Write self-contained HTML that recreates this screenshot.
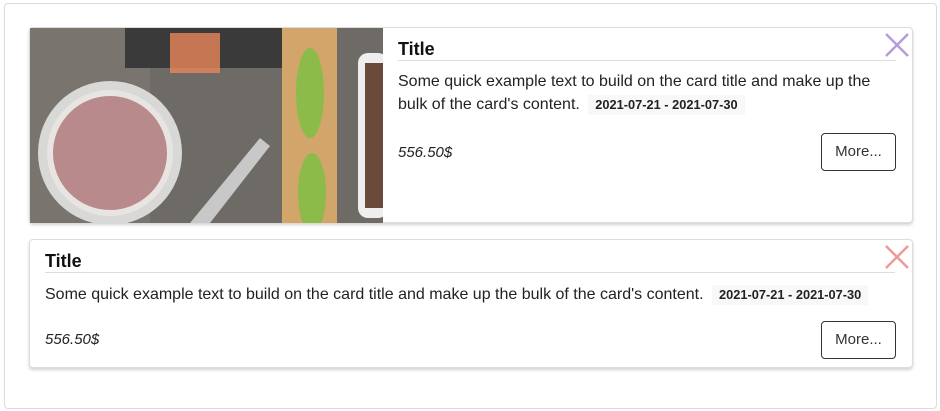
<!DOCTYPE html>
<html><head><style>
*{box-sizing:border-box;margin:0;padding:0}
body{width:940px;height:411px;background:#fff;font-family:"Liberation Sans",sans-serif;color:#212529;position:relative;overflow:hidden}
.outer{position:absolute;left:4px;top:3px;width:933px;height:406px;border:1px solid #dcdcdc;border-radius:4px}
.card{position:absolute;left:29px;width:884px;background:#fff;border:1px solid #ddd;border-radius:4px;box-shadow:0 2px 3px rgba(0,0,0,.18)}
.title{position:absolute;font-size:18px;font-weight:bold;color:#111;border-bottom:1px solid #ddd}
.text{position:absolute;font-size:16px;line-height:23px;color:#222;white-space:nowrap}
.badge{display:inline-block;background:#f8f8f8;font-size:12.8px;font-weight:bold;padding:0 7px;line-height:20px;margin-left:4px}
.price{position:absolute;font-size:15px;font-style:italic;color:#222}
.btn{position:absolute;width:75px;height:38px;border:1px solid #333;border-radius:4px;font-size:15px;line-height:36px;text-align:center;color:#333}
.x{position:absolute}
</style></head><body>
<div class="outer"></div>
<div class="card" style="top:27px;height:196px">
  <svg style="position:absolute;left:0;top:0" width="353" height="195">
    <rect width="353" height="195" fill="#6e6a66"/>
    <rect x="0" y="0" width="120" height="195" fill="#7a746e"/>
    <circle cx="80" cy="125" r="72" fill="#d8d8d6"/>
    <circle cx="80" cy="125" r="60" fill="#b98a8c"/>
    <circle cx="80" cy="125" r="60" fill="none" stroke="#e8e4e2" stroke-width="6"/>
    <rect x="95" y="0" width="160" height="40" fill="#3a3a3a"/>
    <rect x="140" y="5" width="50" height="40" fill="#e8875a" opacity=".8"/>
    <polygon points="160,195 230,110 240,118 180,195" fill="#c8c8c8"/>
    <rect x="252" y="0" width="55" height="195" fill="#d2a56a"/>
    <ellipse cx="280" cy="65" rx="14" ry="45" fill="#8cbb4a"/>
    <ellipse cx="282" cy="165" rx="14" ry="40" fill="#8cbb4a"/>
    <rect x="328" y="25" width="30" height="165" rx="10" fill="#eee"/>
    <rect x="335" y="35" width="20" height="145" fill="#6a4a3a"/>
  </svg>
  <div class="title" style="left:368px;top:10px;width:498px;height:23px;line-height:22px">Title</div>
  <svg class="x" style="left:855px;top:5px" width="24" height="24"><path d="M1 1L23 23M23 1L1 23" stroke="#b39ddb" stroke-width="2.5"/></svg>
  <div class="text" style="left:368px;top:42px">Some quick example text to build on the card title and make up the<br>bulk of the card's content. <span class="badge">2021-07-21 - 2021-07-30</span></div>
  <div class="price" style="left:368px;top:116px">556.50$</div>
  <div class="btn" style="left:791px;top:105px">More...</div>
</div>
<div class="card" style="top:239px;height:129px">
  <div class="title" style="left:15px;top:10px;width:850px;height:23px;line-height:22px">Title</div>
  <svg class="x" style="left:855px;top:5px" width="24" height="24"><path d="M1 1L23 23M23 1L1 23" stroke="#ef9a9a" stroke-width="2.5"/></svg>
  <div class="text" style="left:15px;top:43px">Some quick example text to build on the card title and make up the bulk of the card's content. <span class="badge">2021-07-21 - 2021-07-30</span></div>
  <div class="price" style="left:15px;top:91px">556.50$</div>
  <div class="btn" style="left:791px;top:81px">More...</div>
</div>
</body></html>
